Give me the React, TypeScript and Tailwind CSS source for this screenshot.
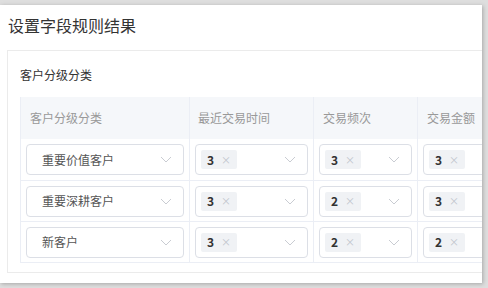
const rows = [
    { level: "重要价值客户", recent: "3", freq: "3", amount: "3" },
    { level: "重要深耕客户", recent: "3", freq: "2", amount: "3" },
    { level: "新客户", recent: "3", freq: "2", amount: "2" },
];

function Chevron() {
    return (
        <svg width="12" height="7" viewBox="0 0 12 7" fill="none" className="shrink-0">
            <path d="M1 1l5 5 5-5" stroke="#c9ccd2" strokeWidth="1" />
        </svg>
    );
}

function Tag({ value }: { value: string }) {
    return (
        <span className="flex items-center h-[19px] px-[6px] gap-[7px] bg-[#f0f2f5] rounded-[2px]">
            <span className="text-[12px] font-semibold text-[#333]">{value}</span>
            <span className="text-[10px] text-[#c0c4cc] leading-none">×</span>
        </span>
    );
}

function SelectBox({ children, width }: { children: React.ReactNode; width: string }) {
    return (
        <div className={`flex items-center justify-between h-[31px] border border-[#dcdfe6] rounded-[4px] pl-[5px] pr-[11px] ${width}`}>
            {children}
            <Chevron />
        </div>
    );
}

export default function App() {
    return (
        <div className="w-[488px] h-[288px] bg-[#dedede] overflow-hidden pt-[5px]"
            style={{ fontFamily: '"Noto Sans CJK SC", "Noto Sans", sans-serif' }}>
            <div className="w-[482px] h-[278px] bg-white overflow-hidden shadow-[1px_1px_4px_rgba(0,0,0,0.25)]">
                <div className="h-[45px] flex items-center pl-[8px] pb-[6px] text-[16px] text-[#333]">设置字段规则结果</div>
                <div className="ml-[7px] h-[223px] border border-r-0 border-[#ebebeb] pl-[12px] pt-[14px] overflow-hidden">
                    <div className="text-[12px] text-[#333] h-[20px] leading-[20px]">客户分级分类</div>
                    <div className="mt-[12px] w-[520px] border-l border-b border-[#ebeef5]">
                        <div className="flex h-[42px] bg-[#f5f7fa] text-[12px] text-[#999] items-center">
                            <div className="w-[169px] pl-[9px] h-full flex items-center border-r border-[#ebeef5]">客户分级分类</div>
                            <div className="w-[124px] pl-[8px] h-full flex items-center border-r border-[#ebeef5]">最近交易时间</div>
                            <div className="w-[104px] pl-[9px] h-full flex items-center border-r border-[#ebeef5]">交易频次</div>
                            <div className="flex-1 pl-[9px] h-full flex items-center">交易金额</div>
                        </div>
                        {rows.map((r, i) => (
                            <div key={i} className={`flex h-[41px] items-center ${i > 0 ? "border-t border-[#ebeef5]" : ""}`}>
                                <div className="w-[169px] h-full flex items-center px-[5px] border-r border-[#ebeef5]">
                                    <SelectBox width="w-[158px]">
                                        <span className="pl-[10px] text-[12px] text-[#555]">{r.level}</span>
                                    </SelectBox>
                                </div>
                                <div className="w-[124px] h-full flex items-center px-[5px] border-r border-[#ebeef5]">
                                    <SelectBox width="w-[114px]"><Tag value={r.recent} /></SelectBox>
                                </div>
                                <div className="w-[104px] h-full flex items-center px-[5px] border-r border-[#ebeef5]">
                                    <SelectBox width="w-[95px]"><Tag value={r.freq} /></SelectBox>
                                </div>
                                <div className="flex-1 h-full flex items-center px-[5px]">
                                    <SelectBox width="w-[95px]"><Tag value={r.amount} /></SelectBox>
                                </div>
                            </div>
                        ))}
                    </div>
                </div>
            </div>
        </div>
    );
}
